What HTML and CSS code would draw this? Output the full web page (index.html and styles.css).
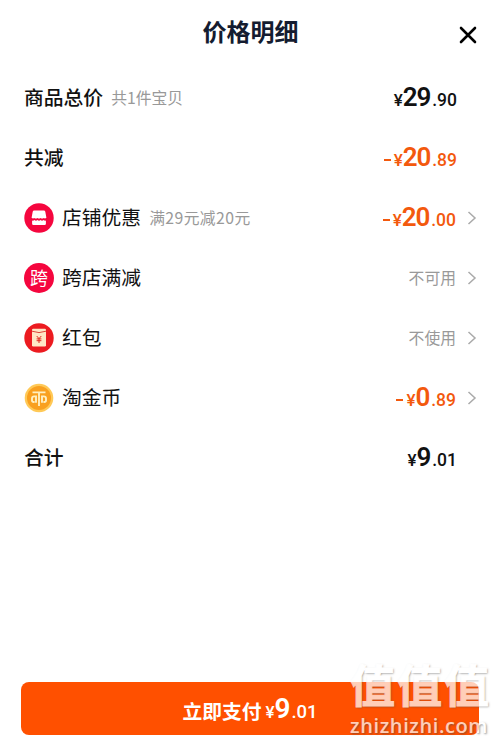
FILE: index.html
```html
<!DOCTYPE html>
<html lang="zh-CN">
<head>
    <meta charset="UTF-8">
    <meta name="viewport" content="width=device-width, initial-scale=1.0">
    <title>价格明细</title>
    <link rel="stylesheet" href="styles.css">
</head>
<body>
    <div class="sheet">
        <div class="header">
            <h1>价格明细</h1>
            <button class="close" aria-label="关闭">
                <svg width="18" height="18" viewBox="0 0 18 18"><path d="M2 2L16 16M16 2L2 16"/></svg>
            </button>
        </div>

        <div class="list">
            <div class="row total">
                <span class="name">商品总价</span>
                <span class="note">共1件宝贝</span>
                <span class="price"><span class="yen">¥</span><b>29</b><span class="cents">.90</span></span>
            </div>
            <div class="row total">
                <span class="name">共减</span>
                <span class="price minus"><i></i><span class="yen">¥</span><b>20</b><span class="cents">.89</span></span>
            </div>
            <div class="row">
                <svg class="icon" viewBox="0 0 30 30">
                    <circle cx="15" cy="15" r="14.7" fill="#f5063e"/>
                    <path d="M10.2 7.5H19.8Q21 7.5 21.3 8.7L22.4 14.8Q21 16 19.8 15Q18.2 16.2 16.6 15Q15 16.2 13.4 15Q11.8 16.2 10.2 15Q9 16 7.6 14.8L8.7 8.7Q9 7.5 10.2 7.5Z" fill="#fff"/>
                    <path d="M8.1 17.6Q9.5 17.9 10.5 17Q12 18.3 13.4 17Q15 18.3 16.6 17Q18 18.3 19.5 17Q20.5 17.9 21.9 17.6V20.7Q21.9 22 20.6 22H9.4Q8.1 22 8.1 20.7Z" fill="#fff"/>
                </svg>
                <span class="name">店铺优惠</span>
                <span class="note">满29元减20元</span>
                <span class="price minus"><i></i><span class="yen">¥</span><b>20</b><span class="cents">.00</span></span>
                <svg class="arrow" viewBox="0 0 10 14"><path d="M1.5 1L8 7L1.5 13"/></svg>
            </div>
            <div class="row">
                <span class="icon cross">跨</span>
                <span class="name">跨店满减</span>
                <span class="status">不可用</span>
                <svg class="arrow" viewBox="0 0 10 14"><path d="M1.5 1L8 7L1.5 13"/></svg>
            </div>
            <div class="row">
                <svg class="icon" viewBox="0 0 30 30">
                    <circle cx="15" cy="15" r="14.7" fill="#ec1b20"/>
                    <rect x="8" y="5.8" width="14" height="17.6" rx="1.2" fill="#ffe8c6"/>
                    <path d="M8 8.2Q15 11 22 8.2" fill="none" stroke="#d8372c" stroke-width="0.9"/>
                    <path d="M12.7 13L15 15.6L17.3 13M12.6 15.9H17.4M12.6 17.7H17.4M15 15.6V20" fill="none" stroke="#e02b20" stroke-width="1"/>
                </svg>
                <span class="name">红包</span>
                <span class="status">不使用</span>
                <svg class="arrow" viewBox="0 0 10 14"><path d="M1.5 1L8 7L1.5 13"/></svg>
            </div>
            <div class="row">
                <svg class="icon" viewBox="0 0 30 30">
                    <circle cx="15" cy="15" r="14.3" fill="#ffc957"/>
                    <circle cx="15" cy="15" r="12" fill="#f9a01f"/>
                    <path d="M8.5 9.4H21.5M15 9.4V23M12 19.8V13.4H10.2Q8 13.4 8 15.6V17.2Q8 19 9.8 19H10.6M18 19.8V13.4H19.8Q22 13.4 22 15.6V17.2Q22 19 20.2 19H19.4" fill="none" stroke="#fff0c2" stroke-width="1.9"/>
                </svg>
                <span class="name">淘金币</span>
                <span class="price minus"><i></i><span class="yen">¥</span><b>0</b><span class="cents">.89</span></span>
                <svg class="arrow" viewBox="0 0 10 14"><path d="M1.5 1L8 7L1.5 13"/></svg>
            </div>
            <div class="row total">
                <span class="name">合计</span>
                <span class="price"><span class="yen">¥</span><b>9</b><span class="cents">.01</span></span>
            </div>
        </div>

        <button class="pay">
            <span class="pay-text">立即支付</span>
            <span class="price"><span class="yen">¥</span><b>9</b><span class="cents">.01</span></span>
        </button>

        <div class="watermark">
            <div class="mark">值值值</div>
            <div class="site">zhizhizhi.com</div>
        </div>
    </div>
</body>
</html>
```
FILE: styles.css
```css
* {
    box-sizing: border-box;
}
body {
    margin: 0;
    background: #fff;
    font-family: "Noto Sans CJK SC", sans-serif;
    color: #111;
}
button {
    border: none;
    padding: 0;
    cursor: pointer;
    font-family: inherit;
}
.sheet {
    position: relative;
    display: flex;
    flex-direction: column;
    width: 500px;
    height: 744px;
    padding-bottom: 9px;
    overflow: hidden;
}
.header {
    display: grid;
    grid-template-columns: 60px 1fr 60px;
    height: 68px;
}
.header h1 {
    grid-column: 2;
    margin: 0;
    padding: 13px 0 0 1px;
    font-size: 24px;
    line-height: 36px;
    font-weight: 700;
    text-align: center;
    color: #141c30;
}
.close {
    height: 18px;
    margin: 26px 23px 0 19px;
    background: none;
}
.close svg {
    display: block;
    fill: none;
    stroke: #000;
    stroke-width: 2.6;
    stroke-linecap: round;
}
.list {
    flex: 1;
    padding: 0 23px 0 24px;
}
.row {
    display: flex;
    align-items: center;
    height: 60px;
}
.name {
    font-size: 19.8px;
    line-height: 30px;
    padding-bottom: 2px;
}
.total {
    padding-right: 20px;
}
.total .name {
    font-weight: 500;
}
.icon {
    flex: none;
    width: 30px;
    height: 30px;
    margin-right: 8px;
}
.cross {
    border-radius: 50%;
    background: #f5063e;
    color: #fff;
    font-size: 18px;
    line-height: 29px;
    text-align: center;
}
.note {
    margin-left: 8px;
    font-size: 15.8px;
    line-height: 24px;
    padding-bottom: 1px;
    color: #999;
}
.row:not(.total) .note {
    letter-spacing: 0.4px;
}
.price {
    display: flex;
    align-items: baseline;
    margin-left: auto;
    font-family: Roboto, "Noto Sans CJK SC", sans-serif;
    font-weight: 500;
    line-height: 30px;
}
.price b {
    font-size: 26px;
    font-weight: 600;
    letter-spacing: -1.1px;
}
/* 负号 */
.price i {
    align-self: center;
    width: 7px;
    height: 2px;
    margin: 3px 3px 0 0;
    background: currentColor;
}
.yen {
    font-size: 17px;
}
.cents {
    margin-left: 2px;
    font-size: 17.5px;
}
.minus {
    color: #f3590d;
}
.status {
    margin-left: auto;
    font-size: 15.8px;
    line-height: 24px;
    color: #999;
}
.arrow {
    width: 10px;
    height: 14px;
    margin-left: 11px;
    fill: none;
    stroke: #aaa;
    stroke-width: 1.5;
}
.row .price + .arrow {
    margin-left: 11px;
}
.pay {
    display: flex;
    align-items: center;
    justify-content: center;
    height: 53px;
    margin: 0 21px;
    border-radius: 8px;
    background: #ff5000;
    color: #fff;
}
.pay-text {
    margin-top: 3px;
    font-size: 19.8px;
    font-weight: 700;
}
.pay .price {
    margin: 3px 0 0 4px;
    font-size: 27px;
}
.pay .price b {
    font-size: 28px;
}
.pay .cents {
    font-size: 18.5px;
}
/* 右下角水印 */
.watermark {
    position: absolute;
    left: 350px;
    top: 654px;
    width: 150px;
    color: #fff;
    opacity: 0.72;
    text-shadow: 1px 1px 2px rgba(70, 70, 70, 0.75);
    white-space: nowrap;
}
.mark {
    font-size: 45px;
    line-height: 60px;
    font-weight: 700;
    letter-spacing: 2px;
    -webkit-text-stroke: 1px #fff;
}
.site {
    font-family: "Open Sans", sans-serif;
    font-size: 20px;
    line-height: 24px;
    font-weight: 600;
    letter-spacing: 0.6px;
}
```
